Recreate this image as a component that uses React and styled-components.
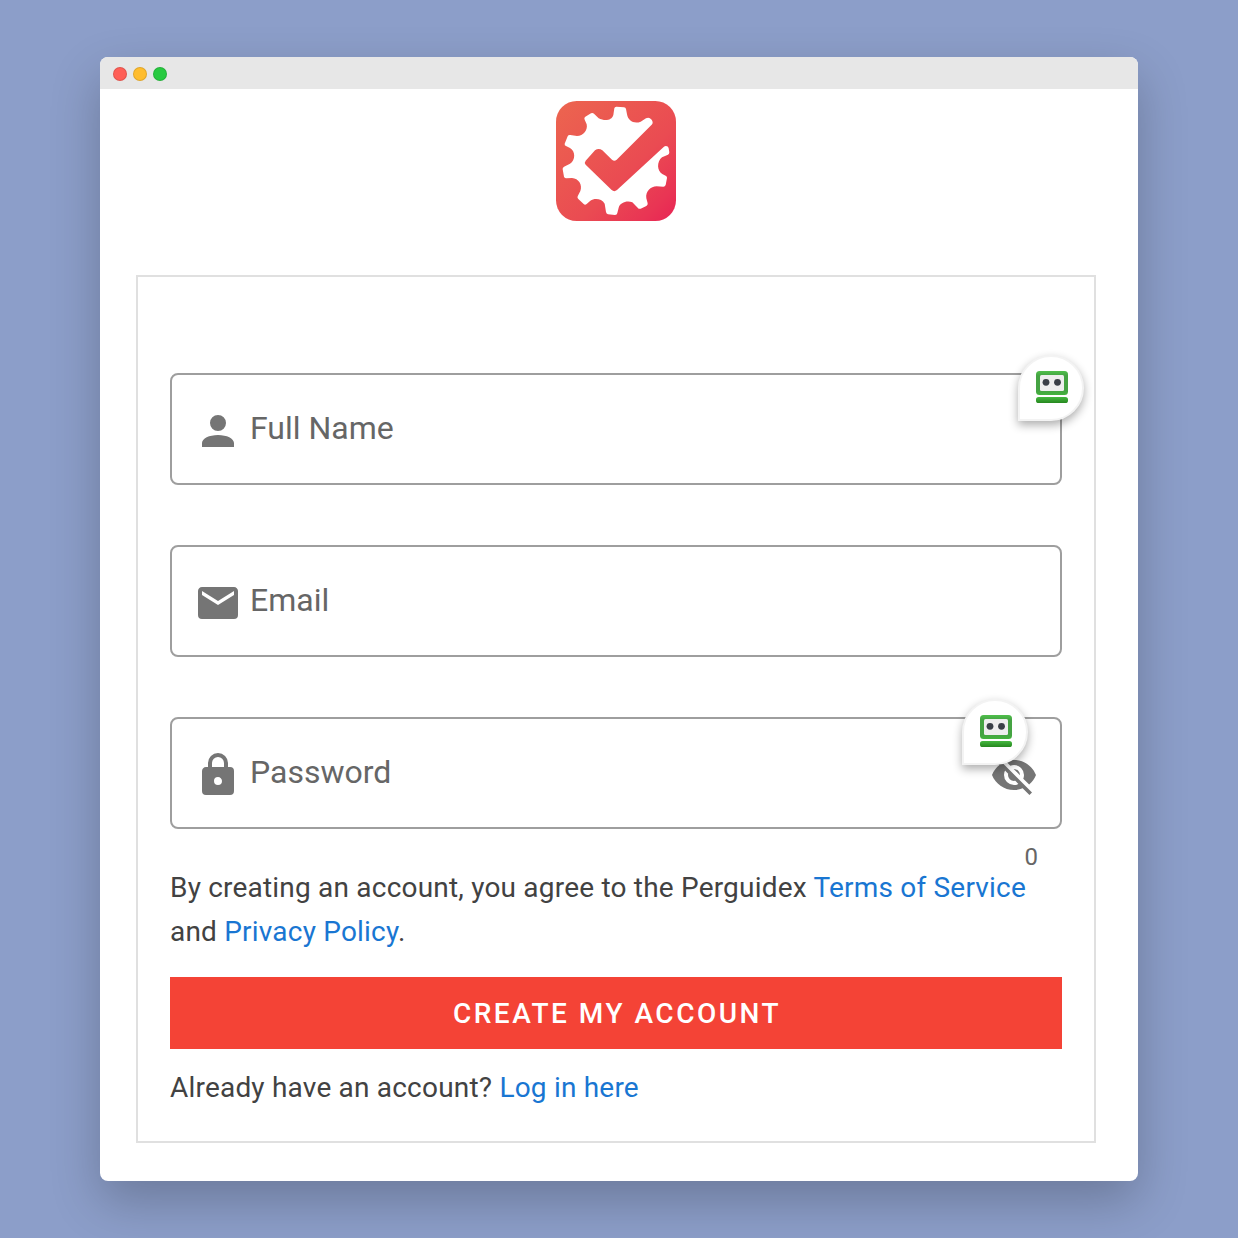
import React, { useState } from "react";
import styled, { createGlobalStyle } from "styled-components";

const GlobalStyle = createGlobalStyle`
  * {
    box-sizing: border-box;
  }
  body {
    margin: 0;
    background-color: #8c9ec9;
    font-family: Roboto, "Liberation Sans", sans-serif;
  }
`;

const Page = styled.div`
  height: 1238px;
  padding: 57px 100px;
  overflow: hidden;
`;

const Window = styled.div`
  height: 1124px;
  border-radius: 8px;
  background-color: #ffffff;
  box-shadow: 0 20px 50px rgba(0, 0, 0, 0.23);
`;

const TitleBar = styled.div`
  height: 32px;
  padding: 2px 13px 0;
  display: flex;
  align-items: center;
  gap: 6px;
  border-radius: 8px 8px 0 0;
  background-color: #e7e7e7;
`;

const Dot = styled.span`
  width: 14px;
  height: 14px;
  border-radius: 50%;
  border: 1px solid rgba(0, 0, 0, 0.12);
  background-color: ${({ $color }) => $color};
`;

const Content = styled.main`
  display: flex;
  flex-direction: column;
  align-items: center;
  gap: 54px;
  padding: 12px 42px 38px 36px;
`;

const LogoSvg = styled.svg`
  display: block;
  width: 120px;
  height: 120px;
`;

const Form = styled.form`
  width: 100%;
  height: 868px;
  padding: 96px 32px 0;
  border: 2px solid #e0e0e0;
`;

const Fields = styled.div`
  display: flex;
  flex-direction: column;
  gap: 60px;
`;

const FieldBox = styled.div`
  position: relative;
  height: 112px;
  padding: 2px 22px 0;
  display: flex;
  align-items: center;
  border: 2px solid #9e9e9e;
  border-radius: 8px;
`;

const Icon = styled.svg`
  width: 48px;
  height: 48px;
  margin-top: 2px;
  flex: none;
  fill: #757575;
`;

const Label = styled.label`
  flex: 1;
  margin: -4px 0 0 8px;
  font-size: 32px;
  line-height: 40px;
  color: #666666;
`;

const EyeButton = styled.button`
  display: flex;
  padding: 0;
  border: none;
  background: none;
  cursor: pointer;
`;

const Badge = styled.span`
  position: absolute;
  top: -20px;
  right: ${({ $right }) => $right}px;
  width: 66px;
  height: 66px;
  display: flex;
  align-items: center;
  justify-content: center;
  border: 2px solid #f3f3f3;
  border-radius: 50% 50% 50% 0;
  background-color: #ffffff;
  box-shadow: 0 4px 10px rgba(0, 0, 0, 0.32);
`;

const RobotSvg = styled.svg`
  width: 32px;
  height: 32px;
  margin: -2px 0 0 2px;
`;

const Counter = styled.div`
  height: 37px;
  padding: 14px 24px 0;
  text-align: right;
  font-size: 24px;
  line-height: 28px;
  color: #666666;
`;

const Text = styled.p`
  margin: 0;
  font-size: 28px;
  line-height: 44px;
  letter-spacing: 0.2px;
  color: #424242;
`;

const Link = styled.a`
  color: #1976d2;
  text-decoration: none;
`;

const SubmitButton = styled.button`
  display: block;
  width: 100%;
  height: 72px;
  margin: 23px 0 17px;
  padding: 0 0 0 2px;
  border: none;
  background-color: #f44336;
  color: #ffffff;
  font-family: inherit;
  font-size: 28px;
  font-weight: 500;
  letter-spacing: 2.5px;
  text-transform: uppercase;
  cursor: pointer;
`;

const icons = {
  account:
    "M12,4A4,4 0 0,1 16,8A4,4 0 0,1 12,12A4,4 0 0,1 8,8A4,4 0 0,1 12,4M12,14C16.42,14 20,15.79 20,18V20H4V18C4,15.79 7.58,14 12,14Z",
  email:
    "M20,8L12,13L4,8V6L12,11L20,6M20,4H4C2.89,4 2,4.89 2,6V18A2,2 0 0,0 4,20H20A2,2 0 0,0 22,18V6C22,4.89 21.1,4 20,4Z",
  lock: "M12,17A2,2 0 0,0 14,15C14,13.89 13.1,13 12,13A2,2 0 0,0 10,15A2,2 0 0,0 12,17M18,8A2,2 0 0,1 20,10V20A2,2 0 0,1 18,22H6A2,2 0 0,1 4,20V10C4,8.89 4.9,8 6,8H7V6A5,5 0 0,1 12,1A5,5 0 0,1 17,6V8H18M12,3A3,3 0 0,0 9,6V8H15V6A3,3 0 0,0 12,3Z",
  eyeOff:
    "M11.83,9L15,12.16C15,12.11 15,12.05 15,12A3,3 0 0,0 12,9C11.94,9 11.89,9 11.83,9M7.53,9.8L9.08,11.35C9.03,11.56 9,11.77 9,12A3,3 0 0,0 12,15C12.22,15 12.44,14.97 12.65,14.92L14.2,16.47C13.53,16.8 12.79,17 12,17A5,5 0 0,1 7,12C7,11.21 7.2,10.47 7.53,9.8M2,4.27L4.28,6.55L4.73,7C3.08,8.3 1.78,10 1,12C2.73,16.39 7,19.5 12,19.5C13.55,19.5 15.03,19.2 16.38,18.66L16.81,19.08L19.73,22L21,20.73L3.27,3M12,7A5,5 0 0,1 17,12C17,12.64 16.87,13.26 16.64,13.82L19.57,16.75C21.07,15.5 22.27,13.86 23,12C21.27,7.61 17,4.5 12,4.5C10.6,4.5 9.26,4.75 8,5.2L10.17,7.35C10.74,7.13 11.35,7 12,7Z",
  eye: "M12,9A3,3 0 0,0 9,12A3,3 0 0,0 12,15A3,3 0 0,0 15,12A3,3 0 0,0 12,9M12,17A5,5 0 0,1 7,12A5,5 0 0,1 12,7A5,5 0 0,1 17,12A5,5 0 0,1 12,17M12,4.5C7,4.5 2.73,7.61 1,12C2.73,16.39 7,19.5 12,19.5C17,19.5 21.27,16.39 23,12C21.27,7.61 17,4.5 12,4.5Z",
};

const MdiIcon = ({ name }) => (
  <Icon viewBox="0 0 24 24">
    <path d={icons[name]} />
  </Icon>
);

const Logo = () => (
  <LogoSvg viewBox="30 30 360 360">
    <defs>
      <linearGradient id="logoFill" x1="0" y1="0" x2="1" y2="1">
        <stop offset="0" stopColor="#ec654f" />
        <stop offset="0.6" stopColor="#ea4b52" />
        <stop offset="0.85" stopColor="#e93554" />
        <stop offset="1" stopColor="#e82454" />
      </linearGradient>
    </defs>
    <rect x="30" y="30" width="360" height="360" rx="62" fill="url(#logoFill)" />
    <path
      fill="#ffffff"
      d="M317 101Q323 95 317 86Q309 77 300 82L284 92C265 100 246 90 243 70L240 54Q239 49 234 49L211 47Q206 47 205 52L202 72C197 89 176 91 158 82L144 68Q140 64 135 67L118 77Q113 80 116 86L122 100C126 118 112 135 93 135L73 132Q67 131 65 136L56 158Q55 163 60 165L72 171C89 180 89 208 72 218L54 227Q49 230 50 235L54 257Q56 262 61 262L78 261C98 262 110 282 103 300L95 316Q93 321 97 324L113 339Q117 343 122 339L133 329C145 321 167 322 176 338L180 363Q181 369 186 370L207 372Q213 372 214 366L218 350C222 334 244 327 259 334L275 350Q279 355 284 353L301 345Q306 342 305 337L301 322C298 302 314 286 332 286L352 287Q357 287 359 282L363 261Q364 256 359 254L350 250C332 240 332 212 348 199L366 191Q370 189 370 184L368 172C366 164 358 163 353 168L213 297Q205 304 197 297L119 221Q114 215 119 209L147 178Q158 170 169 178L198 206Q205 212 212 206Z"
    />
  </LogoSvg>
);

const RobotBadge = ({ right }) => (
  <Badge $right={right}>
    <RobotSvg viewBox="0 0 32 32">
      <defs>
        <linearGradient id="robotHead" x1="0" y1="0" x2="0" y2="1">
          <stop offset="0" stopColor="#4fc04b" />
          <stop offset="0.2" stopColor="#45a343" />
          <stop offset="0.8" stopColor="#45a343" />
          <stop offset="1" stopColor="#42b33c" />
        </linearGradient>
        <linearGradient id="robotBase" x1="0" y1="0" x2="0" y2="1">
          <stop offset="0" stopColor="#45b840" />
          <stop offset="1" stopColor="#26881f" />
        </linearGradient>
      </defs>
      <rect width="32" height="24" rx="3.5" fill="url(#robotHead)" />
      <rect x="4" y="4" width="24" height="16" rx="1.5" fill="#eeeeee" />
      <circle cx="10" cy="11.3" r="3.4" fill="#3a3f47" />
      <circle cx="21.5" cy="11.3" r="3.4" fill="#3a3f47" />
      <rect y="26" width="32" height="6" rx="2.6" fill="url(#robotBase)" />
    </RobotSvg>
  </Badge>
);

const Field = ({ icon, label, children }) => (
  <FieldBox>
    <MdiIcon name={icon} />
    <Label>{label}</Label>
    {children}
  </FieldBox>
);

const App = () => {
  const [showPassword, setShowPassword] = useState(false);

  return (
    <>
      <GlobalStyle />
      <Page>
        <Window>
          <TitleBar>
            <Dot $color="#ff5f57" />
            <Dot $color="#ffbd2e" />
            <Dot $color="#28ca41" />
          </TitleBar>
          <Content>
            <Logo />
            <Form onSubmit={(e) => e.preventDefault()}>
              <Fields>
                <Field icon="account" label="Full Name">
                  <RobotBadge right={-24} />
                </Field>
                <Field icon="email" label="Email" />
                <Field icon="lock" label="Password">
                  <EyeButton
                    type="button"
                    onClick={() => setShowPassword(!showPassword)}
                  >
                    <MdiIcon name={showPassword ? "eye" : "eyeOff"} />
                  </EyeButton>
                  <RobotBadge right={32} />
                </Field>
              </Fields>
              <Counter>0</Counter>
              <Text>
                By creating an account, you agree to the Perguidex{" "}
                <Link href="#">Terms of Service</Link> and{" "}
                <Link href="#">Privacy Policy</Link>.
              </Text>
              <SubmitButton type="submit">Create my account</SubmitButton>
              <Text>
                Already have an account? <Link href="#">Log in here</Link>
              </Text>
            </Form>
          </Content>
        </Window>
      </Page>
    </>
  );
};

export default App;
